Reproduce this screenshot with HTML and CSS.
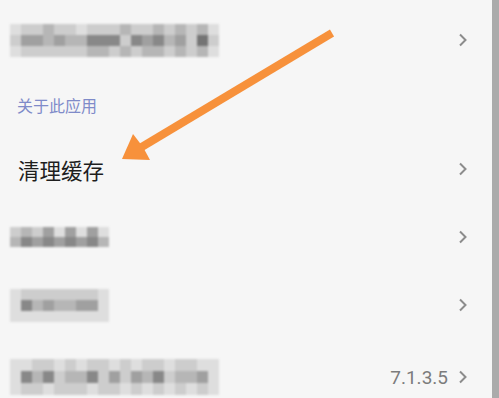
FILE: index.html
```html
<!DOCTYPE html>
<html>
<head>
    <title>设置</title>
    <link rel="stylesheet" href="styles.css">
</head>
<body>
    <div class="page">
        <div class="list">
            <div class="row">
                <div class="mosaic" data-cells="abbcbbabbbcbbcbcbca|bddcdcceeebedecdbfb|abbbbbbccbcbccbcbca"></div>
                <svg class="chevron" viewBox="0 0 10 14"><path d="M2 1.5 L7.5 7 L2 12.5"/></svg>
            </div>

            <div class="section-title">关于此应用</div>

            <div class="row">
                <span class="row-text">清理缓存</span>
                <svg class="chevron" viewBox="0 0 10 14"><path d="M2 1.5 L7.5 7 L2 12.5"/></svg>
            </div>

            <div class="row">
                <div class="mosaic mosaic-sm" data-cells="bcbdadada|cedededec"></div>
                <svg class="chevron" viewBox="0 0 10 14"><path d="M2 1.5 L7.5 7 L2 12.5"/></svg>
            </div>

            <div class="row">
                <div class="mosaic" data-cells="abbbbbbba|aecdccdda|aaaaaaaaa"></div>
                <svg class="chevron" viewBox="0 0 10 14"><path d="M2 1.5 L7.5 7 L2 12.5"/></svg>
            </div>

            <div class="row row-last">
                <div class="mosaic mosaic-lg" data-cells="aabbababbababbabbaa|aecebccebdbdcebccda|abbabbbabbababababa"></div>
                <div class="row-right">
                    <span class="version">7.1.3.5</span>
                    <svg class="chevron" viewBox="0 0 10 14"><path d="M2 1.5 L7.5 7 L2 12.5"/></svg>
                </div>
            </div>
        </div>

        <!-- annotation arrow drawn over the list -->
        <svg class="arrow" viewBox="0 0 499 398">
            <line x1="332" y1="33" x2="140" y2="148"/>
            <polygon points="122,159 133,134 143,147 150,160"/>
        </svg>
    </div>

    <script>
        // Build the blurred mosaic blocks from their shade strings
        document.querySelectorAll('.mosaic').forEach(block => {
            block.innerHTML = block.dataset.cells.split('|').map(line => `
                <div class="mosaic-row">
                    ${line.split('').map(shade => `<span class="px px-${shade}"></span>`).join('')}
                </div>
            `).join('');
        });
    </script>
</body>
</html>
```

FILE: styles.css
```css
:root {
    --background-color: #f6f6f6;
    --text-color: #1e1e1e;
    --section-color: #7f8bc9;
    --muted-color: #7c7c7c;
    --chevron-color: #8c8c8c;
    --scrollbar-color: #ababab;
    --arrow-color: #f7913b;
}

body {
    margin: 0;
    font-family: "Noto Sans CJK SC", "Noto Sans", sans-serif;
    background-color: var(--background-color);
    color: var(--text-color);
    overflow: hidden;
}

.page {
    position: relative;
    box-sizing: border-box;
    width: 499px;
    height: 398px;
    border-right: 7px solid var(--scrollbar-color);
    overflow: hidden;
}

.list {
    padding-top: 6px;
}

.row {
    display: flex;
    justify-content: space-between;
    align-items: center;
    height: 68px;
    padding: 0 24px 0 10px;
}

.row-last {
    height: 76px;
}

.row-text {
    padding-left: 8px;
    font-size: 21.5px;
}

.row-right {
    display: flex;
    align-items: center;
    gap: 10px;
}

.version {
    font-family: Roboto, "Liberation Sans", sans-serif;
    font-size: 19px;
    color: var(--muted-color);
}

.section-title {
    display: flex;
    align-items: center;
    height: 61px;
    padding-left: 17px;
    font-size: 16px;
    color: var(--section-color);
}

.chevron {
    width: 10px;
    height: 14px;
    fill: none;
    stroke: var(--chevron-color);
    stroke-width: 2;
}

.mosaic {
    display: flex;
    flex-direction: column;
    filter: blur(1.3px);
}

.mosaic-row {
    display: flex;
}

.px {
    width: 11px;
    height: 11px;
}

.mosaic-sm .px {
    height: 10px;
}

.mosaic-lg .px {
    height: 12px;
}

.px-a { background: #dedede; }
.px-b { background: #cdcdcd; }
.px-c { background: #b6b6b6; }
.px-d { background: #a0a0a0; }
.px-e { background: #888888; }
.px-f { background: #747474; }

.arrow {
    position: absolute;
    top: 0;
    left: 0;
    width: 499px;
    height: 398px;
    pointer-events: none;
}

.arrow line {
    stroke: var(--arrow-color);
    stroke-width: 8;
}

.arrow polygon {
    fill: var(--arrow-color);
}
```
